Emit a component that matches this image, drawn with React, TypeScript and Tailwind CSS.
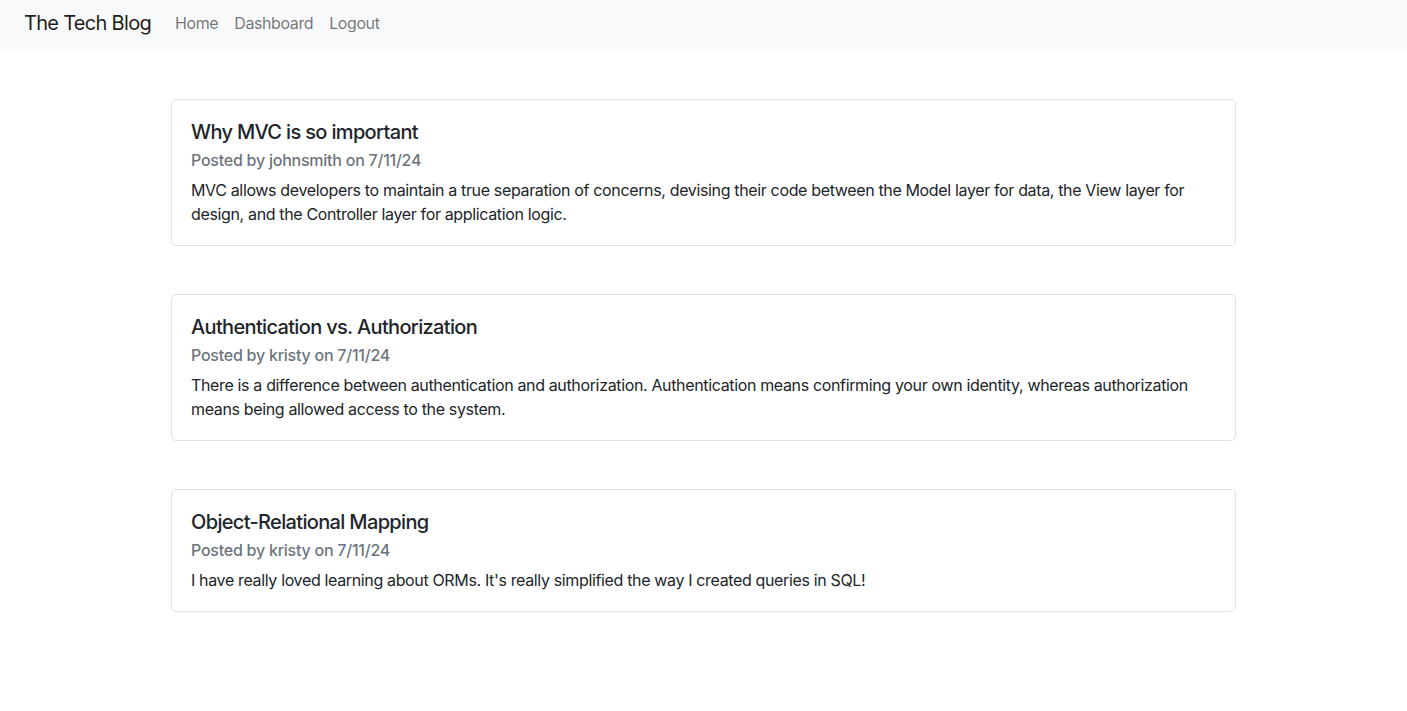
import React from "react";

const posts = [
  {
    title: "Why MVC is so important",
    author: "johnsmith",
    date: "7/11/24",
    body: "MVC allows developers to maintain a true separation of concerns, devising their code between the Model layer for data, the View layer for design, and the Controller layer for application logic.",
  },
  {
    title: "Authentication vs. Authorization",
    author: "kristy",
    date: "7/11/24",
    body: "There is a difference between authentication and authorization. Authentication means confirming your own identity, whereas authorization means being allowed access to the system.",
  },
  {
    title: "Object-Relational Mapping",
    author: "kristy",
    date: "7/11/24",
    body: "I have really loved learning about ORMs. It's really simplified the way I created queries in SQL!",
  },
];

export default function App() {
  return (
    <div
      className="min-h-screen bg-white text-[#212529]"
      style={{ fontFamily: "Inter, 'Noto Sans', sans-serif" }}
    >
      <nav className="flex h-[51px] items-start bg-[#f8f9fa] pl-6 pt-2">
        <a className="mr-4 text-[20px] leading-[30px] tracking-[-0.035em] text-[rgba(0,0,0,0.9)]">
          The Tech Blog
        </a>
        <div className="flex">
          {["Home", "Dashboard", "Logout"].map((l) => (
            <a
              key={l}
              className="px-2 text-[16px] leading-[30px] tracking-[-0.025em] text-[rgba(0,0,0,0.55)]"
            >
              {l}
            </a>
          ))}
        </div>
      </nav>
      <main className="mx-auto flex w-[1065px] flex-col gap-[48px] pt-[48px]">
        {posts.map((p) => (
          <div
            key={p.title}
            className="rounded-[5px] border border-[#dee2e6] px-[19px] py-[19.5px]"
          >
            <h5 className="mb-[4px] text-[20px] font-medium leading-[24px] tracking-[-0.033em]">
              {p.title}
            </h5>
            <h6 className="mb-[6px] text-[16px] font-medium leading-[24px] tracking-[-0.015em] text-[#6c757d]">
              Posted by {p.author} on {p.date}
            </h6>
            <p className="text-[16px] leading-[24px] tracking-[-0.022em]">{p.body}</p>
          </div>
        ))}
      </main>
    </div>
  );
}
